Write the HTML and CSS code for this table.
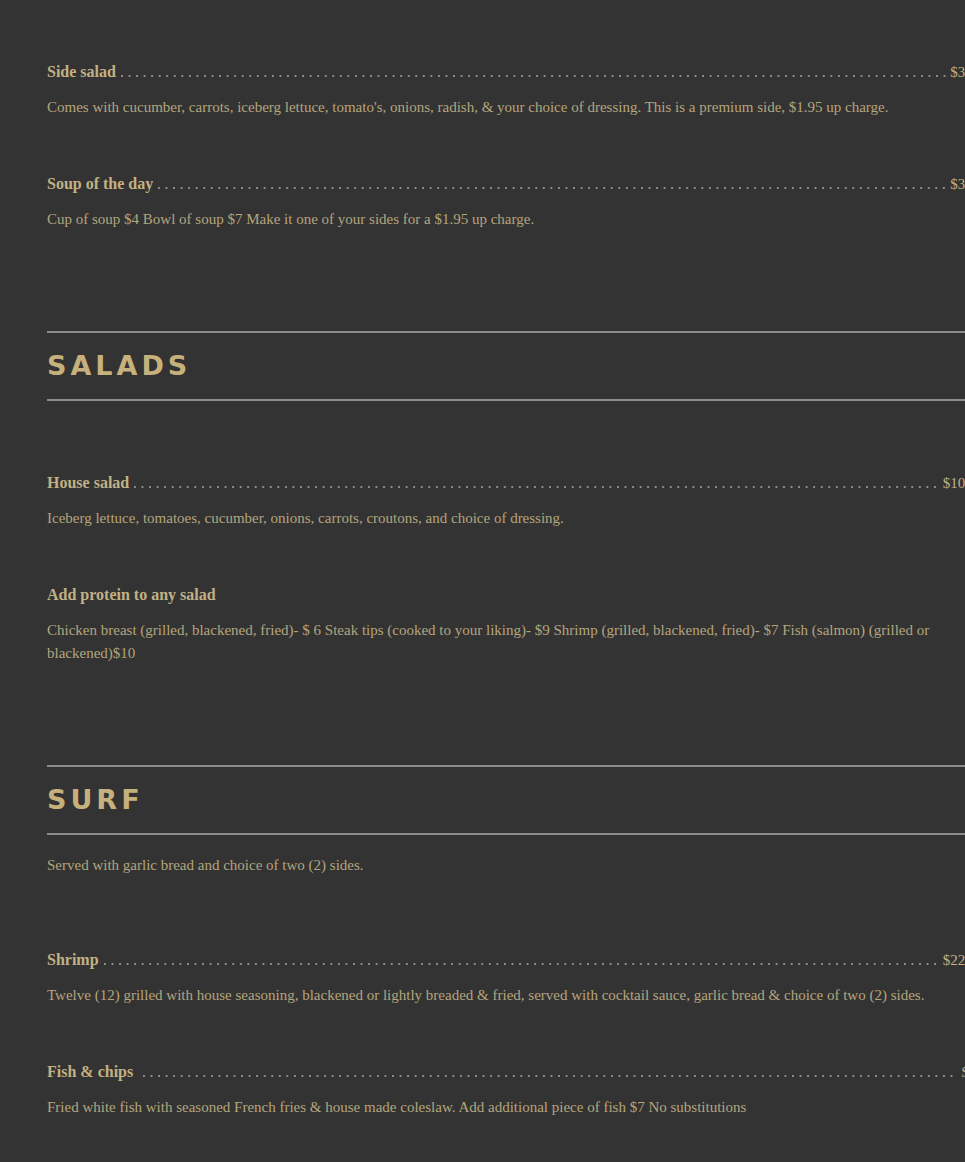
FILE: index.html
```html
<!DOCTYPE html>
<html lang="en">
<head>
<meta charset="utf-8">
<title>Menu</title>
<link rel="stylesheet" href="styles.css">
</head>
<body>
<main class="menu">
  <section class="section section-top">
    <p class="desc desc-clipped">Add a cup of chili or a side of peppers, onions or your choice of topping.</p>

    <article class="item">
      <div class="item-row"><h3 class="item-name">Side salad</h3><span class="leader"></span><span class="price">$3.95</span></div>
      <p class="desc">Comes with cucumber, carrots, iceberg lettuce, tomato's, onions, radish, &amp; your choice of dressing. This is a premium side, $1.95 up charge.</p>
    </article>

    <article class="item">
      <div class="item-row"><h3 class="item-name">Soup of the day</h3><span class="leader"></span><span class="price">$3.95</span></div>
      <p class="desc">Cup of soup $4 Bowl of soup $7 Make it one of your sides for a $1.95 up charge.</p>
    </article>
  </section>

  <section class="section">
    <h2 class="section-title">Salads</h2>
    <div class="section-body">
      <article class="item">
        <div class="item-row"><h3 class="item-name">House salad</h3><span class="leader"></span><span class="price">$10.95</span></div>
        <p class="desc">Iceberg lettuce, tomatoes, cucumber, onions, carrots, croutons, and choice of dressing.</p>
      </article>

      <article class="item">
        <div class="item-row"><h3 class="item-name">Add protein to any salad</h3></div>
        <p class="desc">Chicken breast (grilled, blackened, fried)- $ 6 Steak tips (cooked to your liking)- $9 Shrimp (grilled, blackened, fried)- $7 Fish (salmon) (grilled or blackened)$10</p>
      </article>
    </div>
  </section>

  <section class="section">
    <h2 class="section-title">Surf</h2>
    <p class="desc section-intro">Served with garlic bread and choice of two (2) sides.</p>
    <div class="section-body">
      <article class="item">
        <div class="item-row"><h3 class="item-name">Shrimp</h3><span class="leader"></span><span class="price">$22.95</span></div>
        <p class="desc">Twelve (12) grilled with house seasoning, blackened or lightly breaded &amp; fried, served with cocktail sauce, garlic bread &amp; choice of two (2) sides.</p>
      </article>

      <article class="item">
        <div class="item-row"><h3 class="item-name item-name-wide">Fish &amp; chips</h3><span class="leader leader-wide"></span><span class="price">$16</span></div>
        <p class="desc">Fried white fish with seasoned French fries &amp; house made coleslaw. Add additional piece of fish $7 No substitutions</p>
      </article>
    </div>
  </section>
</main>
</body>
</html>
```

FILE: styles.css
```css
html, body {
  margin: 0;
  padding: 0;
  background: #333333;
  overflow: hidden;
}

body {
  font-family: "Liberation Serif", "Times New Roman", serif;
  color: #b4a57d;
}

.menu {
  width: 937px;
  padding-left: 47px;
}

.section {
  padding-bottom: 100px;
}

.section-title {
  margin: 0;
  border-top: 2px solid #8b8b8b;
  border-bottom: 2px solid #8b8b8b;
  padding: 16px 0;
  height: 34px;
  line-height: 34px;
  font-family: "DejaVu Sans", "Verdana", sans-serif;
  font-weight: 700;
  font-size: 27px;
  letter-spacing: 4px;
  text-transform: uppercase;
  color: #c6b17d;
}

.section-body {
  padding-top: 70px;
}

.section-intro + .section-body {
  padding-top: 71px;
}

.item + .item {
  margin-top: 53px;
}

.item-row {
  display: flex;
  align-items: baseline;
  height: 24px;
  line-height: 24px;
}

.item-name {
  margin: 0 5px 0 0;
  font-size: 16px;
  font-weight: 700;
  color: #c2b183;
  white-space: nowrap;
}

.item-name-wide {
  margin-right: 10px;
}

.leader {
  flex: 1;
  height: 2px;
  background-image: radial-gradient(circle at 1px 1px, #8d8d88 0.8px, transparent 1.1px);
  background-size: 7.55px 2px;
  background-repeat: repeat-x;
}

.leader-wide {
  margin-right: 4px;
}

.price {
  margin-left: 4px;
  font-size: 15px;
  color: #c2b183;
  white-space: nowrap;
}

.desc {
  margin: 12px 0 0;
  font-size: 15px;
  line-height: 23px;
  color: #b4a57d;
}

.desc.section-intro {
  margin-top: 19px;
}

.desc.desc-clipped {
  margin-top: -19px;
  margin-bottom: 56px;
}
```
